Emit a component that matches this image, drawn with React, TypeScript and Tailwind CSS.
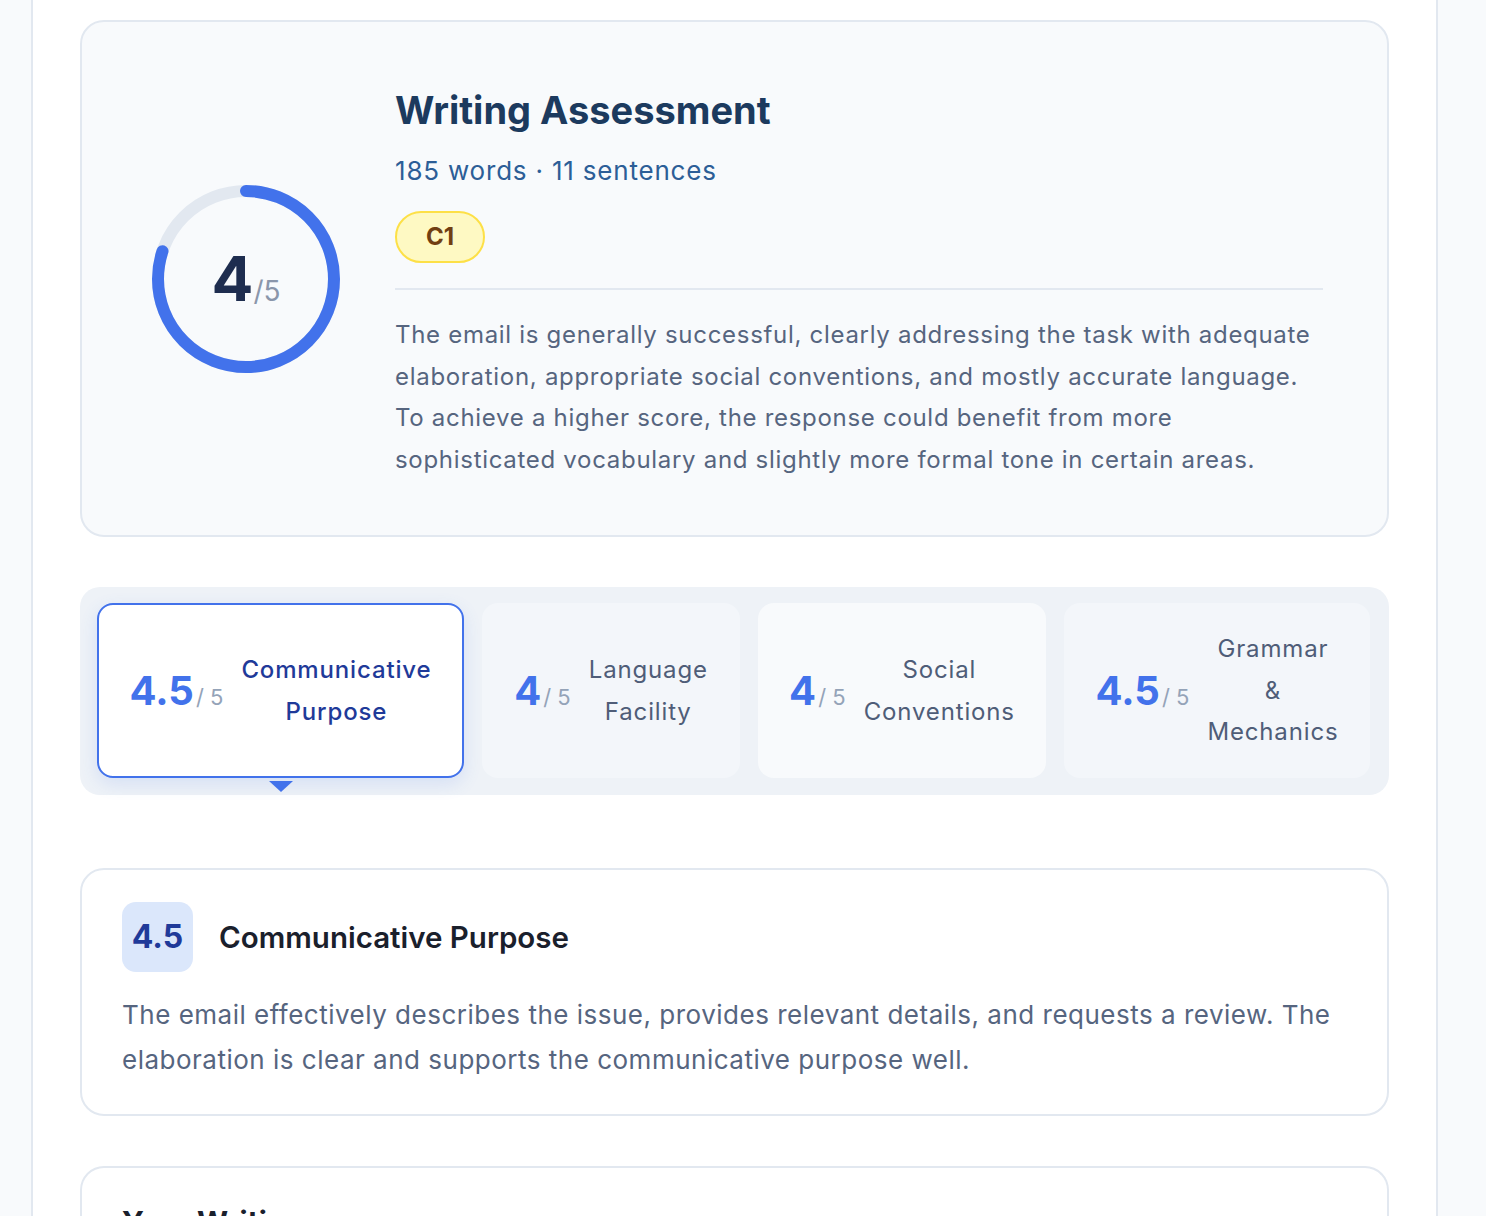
import React from "react";

const tabs = [
  { score: "4.5", words: ["Communicative", "Purpose"], w: "w-[367px]", active: true, bg: "" },
  { score: "4", words: ["Language", "Facility"], w: "w-[258px]", active: false, bg: "bg-[#f3f6fa]" },
  { score: "4", words: ["Social", "Conventions"], w: "w-[288px]", active: false, bg: "bg-[#f8fafc]" },
  { score: "4.5", words: ["Grammar", "&", "Mechanics"], w: "w-[306px]", active: false, bg: "bg-[#f3f6fa]" },
];

function ScoreRing() {
  const r = 88;
  const c = 2 * Math.PI * r;
  return (
    <div className="relative w-[200px] h-[200px] shrink-0 mb-[10px]">
      <svg width="200" height="200" viewBox="0 0 200 200">
        <circle cx="100" cy="100" r={r} fill="none" stroke="#e2e8f0" strokeWidth="12" />
        <circle
          cx="100"
          cy="100"
          r={r}
          fill="none"
          stroke="#4272eb"
          strokeWidth="12"
          strokeLinecap="round"
          strokeDasharray={c}
          strokeDashoffset={c * 0.2}
          transform="rotate(-90 100 100)"
        />
      </svg>
      <div className="absolute inset-0 flex items-center justify-center">
        <div className="flex items-baseline">
          <span className="text-[62px] leading-none font-bold text-[#1e2d4f]">4</span>
          <span className="text-[28px] leading-none text-[#8a96ab]">/5</span>
        </div>
      </div>
    </div>
  );
}

export default function App() {
  return (
    <div className="min-h-screen bg-[#f8fafc]" style={{ fontFamily: "Inter, 'Noto Sans', sans-serif" }}>
      <div className="ml-[31px] w-[1407px] min-h-[1216px] bg-white border-x-2 border-[#e2e8f0] px-[47px] pt-5 flex flex-col">
        {/* Summary card */}
        <div className="flex items-center gap-[49px] bg-[#f8fafc] border-2 border-[#e2e8f0] rounded-[24px] pl-[64px] pr-[64px] pt-[66px] pb-[55px]">
          <ScoreRing />
          <div className="flex-1 flex flex-col">
            <h1 className="text-[38px] leading-[44px] font-bold text-[#1c3a5e]">Writing Assessment</h1>
            <p className="mt-[21px] text-[26px] leading-[36px] tracking-[0.8px] text-[#2c5e97]">185 words · 11 sentences</p>
            <div className="mt-[22px]">
              <span className="inline-flex items-center justify-center w-[90px] h-[52px] rounded-full bg-[#fef9c3] border-2 border-[#fde047] text-[24px] font-bold text-[#713f12]">
                C1
              </span>
            </div>
            <div className="mt-[25px] h-[2px] bg-[#e2e8f0]" />
            <p className="mt-[24px] text-[24px] leading-[41.5px] tracking-[0.7px] text-[#56657f]">
              The email is generally successful, clearly addressing the task with adequate elaboration, appropriate
              social conventions, and mostly accurate language. To achieve a higher score, the response could benefit
              from more sophisticated vocabulary and slightly more formal tone in certain areas.
            </p>
          </div>
        </div>

        {/* Tabs */}
        <div className="mt-[50px] bg-[#eef2f7] rounded-[20px] pl-[17px] pr-[16px] pt-[16px] pb-[17px] flex gap-[18px]">
          {tabs.map((t, i) => (
            <div key={i} className={`relative ${t.w} h-[175px] shrink-0`}>
              <div
                className={`h-full flex items-center justify-center gap-[18px] rounded-[16px] px-[28px] ${
                  t.active
                    ? "bg-white border-2 border-[#4272eb] shadow-[0_6px_18px_rgba(66,114,235,0.14)]"
                    : t.bg
                }`}
              >
                <div className="flex items-baseline shrink-0">
                  <span className="text-[40px] leading-none font-bold text-[#4272eb]">{t.score}</span>
                  <span className="text-[22px] leading-none text-[#94a3b8] ml-[2px]">/ 5</span>
                </div>
                <div
                  className={`flex flex-col items-center text-center text-[24px] leading-[41.5px] tracking-[0.85px] ${
                    t.active ? "text-[#1f3a99] font-medium" : "text-[#4f5d78]"
                  }`}
                >
                  {t.words.map((w) => (
                    <span key={w}>{w}</span>
                  ))}
                </div>
              </div>
              {t.active && (
                <div className="absolute left-1/2 -translate-x-1/2 top-full mt-[3px] w-0 h-0 border-l-[12px] border-r-[12px] border-t-[11px] border-l-transparent border-r-transparent border-t-[#4272eb]" />
              )}
            </div>
          ))}
        </div>

        {/* Detail card */}
        <div className="mt-[73px] bg-white border-2 border-[#e2e8f0] rounded-[24px] px-[40px] pt-[32px] pb-[32px]">
          <div className="flex items-center gap-[26px]">
            <div className="w-[71px] h-[70px] rounded-[14px] bg-[#dbe7fb] flex items-center justify-center text-[32px] font-bold text-[#1f3a99]">
              4.5
            </div>
            <h2 className="text-[29.5px] font-semibold text-[#1a202c]">Communicative Purpose</h2>
          </div>
          <p className="mt-[20px] text-[26px] leading-[45px] tracking-[0.5px] text-[#56657f]">
            The email effectively describes the issue, provides relevant details, and requests a review. The
            elaboration is clear and supports the communicative purpose well.
          </p>
        </div>

        {/* Your Writing card */}
        <div className="mt-[50px] bg-white border-2 border-[#e2e8f0] border-b-0 rounded-t-[24px] px-[40px] pt-[32px] h-[200px]">
          <h2 className="text-[30px] font-bold text-[#1a202c]">Your Writing</h2>
        </div>
      </div>
    </div>
  );
}
